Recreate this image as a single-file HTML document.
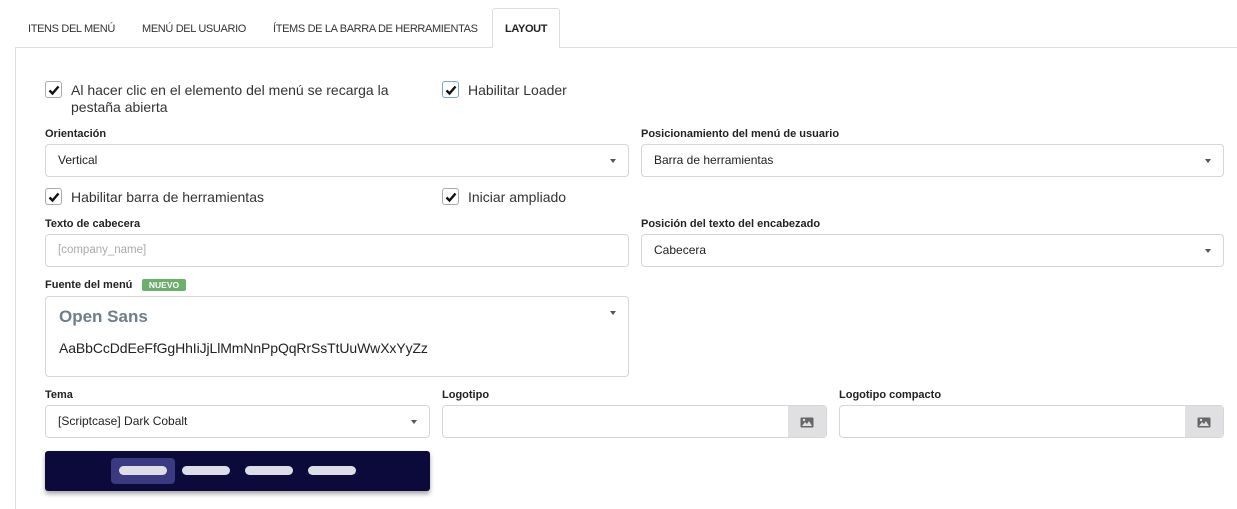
<!DOCTYPE html>
<html style="overflow:hidden;height:509px"><head><meta charset="utf-8"><style>
*{box-sizing:border-box;margin:0;padding:0}
body{width:1237px;height:509px;background:#fff;font-family:"Liberation Sans",sans-serif;color:#222;position:relative;overflow:hidden}
.a{position:absolute}
.tab{position:absolute;top:9px;height:40px;font-size:11px;color:#333;line-height:40px;letter-spacing:-0.35px}
.panel{position:absolute;left:15px;top:47px;width:1230px;height:462px;border:1px solid #ddd;border-bottom:none}
.cb{position:absolute;width:17px;height:17px;border:1px solid #aaa;border-radius:3px;background:#fff}
.cb svg{position:absolute;left:2px;top:2px}
.cl{position:absolute;font-size:14px;color:#333;line-height:17px}
.lb{position:absolute;font-size:11px;font-weight:bold;color:#222}
.box{position:absolute;border:1px solid #d6d6d6;border-radius:4px;background:#fff;font-size:12px;color:#222;padding-left:12px}
.arr{position:absolute;right:12px;top:50%;margin-top:-2px;width:0;height:0;border-left:3.5px solid transparent;border-right:3.5px solid transparent;border-top:4px solid #555}
.btn{position:absolute;right:0;top:0;bottom:0;width:38px;background:#e0e0e2;border-radius:0 4px 4px 0}
.pill{position:absolute;top:466px;width:48px;height:9px;border-radius:5px;background:#dddde8}
</style></head><body>
<div class="panel"></div>
<div class="tab" style="left:28px">ITENS DEL MENÚ</div>
<div class="tab" style="left:142px">MENÚ DEL USUARIO</div>
<div class="tab" style="left:273px">ÍTEMS DE LA BARRA DE HERRAMIENTAS</div>
<div class="a" style="left:492px;top:8px;width:68px;height:40px;border:1px solid #ddd;border-bottom:none;border-radius:3px 3px 0 0;background:#fff"></div>
<div class="tab" style="left:505px;font-weight:bold;color:#222">LAYOUT</div>

<div class="cb" style="left:45px;top:81px"><svg width="12" height="12" viewBox="0 0 12 12"><path d="M1.5 6.5 L4.5 9.5 L10.5 2.5" stroke="#111" stroke-width="2.4" fill="none"/></svg></div>
<div class="cl" style="left:71px;top:82px">Al hacer clic en el elemento del menú se recarga la<br>pestaña abierta</div>
<div class="cb" style="left:442px;top:81px;border-color:#7aa7c7"><svg width="12" height="12" viewBox="0 0 12 12"><path d="M1.5 6.5 L4.5 9.5 L10.5 2.5" stroke="#111" stroke-width="2.4" fill="none"/></svg></div>
<div class="cl" style="left:468px;top:82px">Habilitar Loader</div>

<div class="lb" style="left:45px;top:128px">Orientación</div>
<div class="box" style="left:45px;top:144px;width:584px;height:33px;line-height:31px">Vertical<div class="arr"></div></div>
<div class="lb" style="left:641px;top:128px">Posicionamiento del menú de usuario</div>
<div class="box" style="left:641px;top:144px;width:583px;height:33px;line-height:31px">Barra de herramientas<div class="arr"></div></div>

<div class="cb" style="left:45px;top:188px"><svg width="12" height="12" viewBox="0 0 12 12"><path d="M1.5 6.5 L4.5 9.5 L10.5 2.5" stroke="#111" stroke-width="2.4" fill="none"/></svg></div>
<div class="cl" style="left:71px;top:189px">Habilitar barra de herramientas</div>
<div class="cb" style="left:442px;top:188px"><svg width="12" height="12" viewBox="0 0 12 12"><path d="M1.5 6.5 L4.5 9.5 L10.5 2.5" stroke="#111" stroke-width="2.4" fill="none"/></svg></div>
<div class="cl" style="left:468px;top:189px">Iniciar ampliado</div>

<div class="lb" style="left:45px;top:218px">Texto de cabecera</div>
<div class="box" style="left:45px;top:234px;width:584px;height:33px;line-height:31px;color:#aaa;font-size:11.5px">[company_name]</div>
<div class="lb" style="left:641px;top:218px">Posición del texto del encabezado</div>
<div class="box" style="left:641px;top:234px;width:583px;height:33px;line-height:31px">Cabecera<div class="arr"></div></div>

<div class="lb" style="left:45px;top:279px">Fuente del menú</div>
<div class="a" style="left:142px;top:279px;width:44px;height:12px;background:#6cae6c;color:#fff;font-size:8.5px;font-weight:bold;text-align:center;line-height:12px;border-radius:2px">NUEVO</div>
<div class="box" style="left:45px;top:296px;width:584px;height:81px">
<div class="a" style="left:13px;top:10px;font-size:17px;font-weight:bold;color:#6b7f8a">Open Sans</div>
<div class="a" style="left:13px;top:43px;font-size:14px;color:#222;letter-spacing:-0.1px">AaBbCcDdEeFfGgHhIiJjLlMmNnPpQqRrSsTtUuWwXxYyZz</div>
<div class="arr" style="top:14px;margin-top:0"></div></div>

<div class="lb" style="left:45px;top:389px">Tema</div>
<div class="box" style="left:45px;top:405px;width:385px;height:33px;line-height:31px">[Scriptcase] Dark Cobalt<div class="arr"></div></div>
<div class="lb" style="left:442px;top:389px">Logotipo</div>
<div class="box" style="left:442px;top:405px;width:385px;height:33px"><div class="btn"><svg class="a" style="left:12px;top:11px" width="14" height="11" viewBox="0 0 14 11"><rect x="0.5" y="0.5" width="13" height="10" fill="#666" rx="1"/><path d="M2 9 L5 5 L7 7 L9 4 L12 9Z" fill="#e0e0e2"/><circle cx="4" cy="3" r="1.2" fill="#e0e0e2"/></svg></div></div>
<div class="lb" style="left:839px;top:389px">Logotipo compacto</div>
<div class="box" style="left:839px;top:405px;width:385px;height:33px"><div class="btn"><svg class="a" style="left:12px;top:11px" width="14" height="11" viewBox="0 0 14 11"><rect x="0.5" y="0.5" width="13" height="10" fill="#666" rx="1"/><path d="M2 9 L5 5 L7 7 L9 4 L12 9Z" fill="#e0e0e2"/><circle cx="4" cy="3" r="1.2" fill="#e0e0e2"/></svg></div></div>

<div class="a" style="left:45px;top:451px;width:385px;height:40px;background:#0b0a3a;border-radius:3px;box-shadow:0 3px 5px rgba(0,0,0,.35)"></div>
<div class="a" style="left:111px;top:458px;width:64px;height:26px;background:#3b3a80;border-radius:4px"></div>
<div class="pill" style="left:119px"></div>
<div class="pill" style="left:182px"></div>
<div class="pill" style="left:245px"></div>
<div class="pill" style="left:308px"></div>
</body></html>
